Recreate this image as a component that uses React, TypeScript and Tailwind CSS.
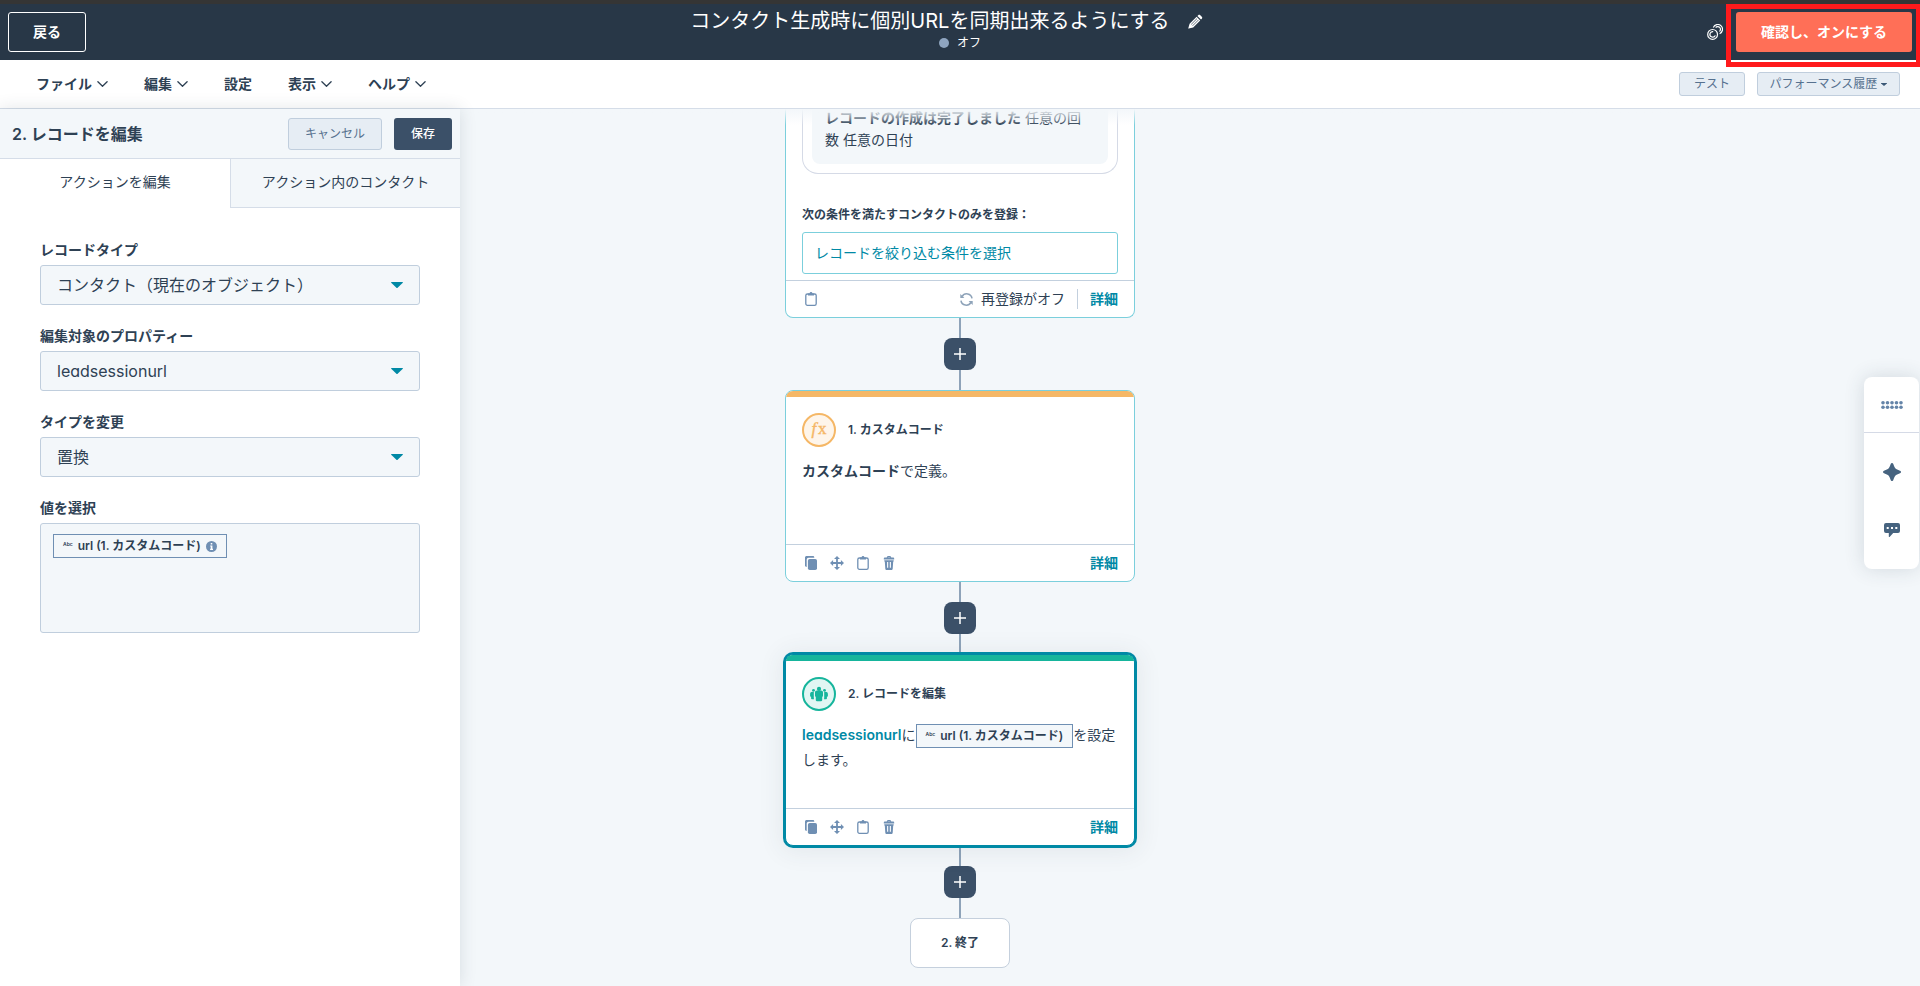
import React from "react";

type IconProps = { className?: string };

const ChevronDown = () => (
  <svg className="h-[6px] w-[11px]" viewBox="0 0 11 6" fill="none" stroke="currentColor" strokeWidth="1.3" strokeLinecap="round" strokeLinejoin="round" aria-hidden="true">
    <path d="M.9.7 5.5 5.2 10.1.7" />
  </svg>
);

const Caret = ({ className = "" }: IconProps) => (
  <svg className={className} viewBox="0 0 12 6" fill="currentColor" aria-hidden="true">
    <path d="M.6 0h10.8c.5 0 .7.5.4.8L6.6 5.7a.9.9 0 0 1-1.2 0L.2.8C-.1.5.1 0 .6 0Z" />
  </svg>
);

const Pencil = () => (
  <svg className="h-[15px] w-[15px]" viewBox="0 0 15 15" aria-hidden="true">
    <path fill="#fff" d="M10.2 1.2c.6-.6 1.5-.6 2.1 0l1.5 1.5c.6.6.6 1.5 0 2.1l-.8.8-3.600-3.600ZM8.600 2.800l3.600 3.600-7 7L.7 14.600c-.3.1-.5-.1-.4-.4l1.300-4.400Z" />
    <path stroke="#283747" strokeWidth=".7" d="M9 4.600 3.200 10.400M10.400 6 4.600 11.800" />
  </svg>
);

const LinkRings = () => (
  <svg className="h-4 w-4" viewBox="0 0 16 16" fill="none" stroke="#fff" strokeWidth="1.200" aria-hidden="true">
    <circle cx="5.600" cy="10.400" r="4.900" />
    <path d="M6.200 7.600a2.800 2.800 0 1 0 2.100 3.800" />
    <path d="M6.300 3.400A4.800 4.800 0 1 1 12.600 9.700" />
    <path d="M8.600 3.500a2.800 2.800 0 1 1 3.900 4" />
  </svg>
);

const Clipboard = () => (
  <svg className="h-[14px] w-[14px]" viewBox="0 0 14 14" aria-hidden="true">
    <rect x="1.800" y="2" width="10.400" height="11.300" rx="1.600" fill="none" stroke="currentColor" strokeWidth="1.300" />
    <path fill="currentColor" d="M4 1.400h1.600a1.400 1.400 0 0 1 2.800 0H10v2.100H4Z" />
  </svg>
);

const Copy = () => (
  <svg className="h-[14px] w-[14px]" viewBox="0 0 14 14" fill="currentColor" aria-hidden="true">
    <path d="M2.600 0h6.200c.9 0 1.400.5 1.500 1.400v.3H4.700c-1.200 0-2 .8-2 2v7.300C1.700 10.900 1 10.400 1 9.500V1.600C1 .7 1.700 0 2.600 0Z" />
    <rect x="3.900" y="2.900" width="9.100" height="11.100" rx="1.800" />
  </svg>
);

const Move = () => (
  <svg className="h-[14px] w-[14px]" viewBox="0 0 14 14" fill="currentColor" aria-hidden="true">
    <path d="M7 0 10 3.100H7.900v3h3V4L14 7l-3.100 3V7.900h-3v3H10L7 14l-3-3.100h2.100v-3h-3V10L0 7l3.100-3v2.100h3v-3H4Z" />
  </svg>
);

const Trash = () => (
  <svg className="h-[14px] w-[14px]" viewBox="0 0 14 14" fill="currentColor" aria-hidden="true">
    <path fillRule="evenodd" d="M2.700 1.500h2l.5-1c.2-.3.400-.5.700-.5h2.200c.3 0 .5.200.7.500l.5 1h2c.5 0 .9.400.9.900v1.100H1.800V2.400c0-.5.400-.9.900-.9Zm3.200-.3-.1.300h2.400l-.1-.3Z" />
    <path fillRule="evenodd" d="M2.300 4.200h9.400v1.300h-.5l-.5 7.200c-.1.800-.6 1.300-1.400 1.300H4.700c-.8 0-1.300-.5-1.400-1.300l-.5-7.200h-.5ZM5.100 6v5.800h1.100V6Zm2.700 0v5.800h1.100V6Z" />
  </svg>
);

const Sync = () => (
  <svg className="h-[13px] w-[13px]" viewBox="0 0 13 13" fill="none" stroke="currentColor" strokeWidth="1.600" aria-hidden="true">
    <path d="M12 5.400A5.300 5.300 0 0 0 2.100 3.600M1 7.600A5.300 5.300 0 0 0 10.900 9.400" />
    <path d="M.3.900v4.100h4.100ZM12.700 12.100V8H8.600Z" fill="currentColor" stroke="none" />
  </svg>
);

const People = () => (
  <svg className="h-[18px] w-[18px]" viewBox="0 0 18 18" fill="#16b59c" aria-hidden="true">
    <circle cx="9" cy="3.900" r="2.100" />
    <path d="M7 5.600h4c1.300 0 2 .8 2 2v2.900c0 .9-.4 1.300-.8 1.300v3.300c0 .7-.4 1.100-1 1.100H6.800c-.6 0-1-.4-1-1.100v-3.300c-.4 0-.8-.4-.8-1.300V7.600c0-1.200.700-2 2-2Z" />
    <circle cx="3.500" cy="5.300" r="1.400" />
    <circle cx="14.500" cy="5.300" r="1.400" />
    <path d="M3.800 6.700v6.700c.4.200.4.900-.2.900H1.900c-.5 0-.8-.3-.8-.8v-1.700c-.6 0-1-.4-1-1.100V9c0-1.400 1-2.300 2.400-2.300ZM14.200 6.700v6.700c-.4.200-.4.900.2.900h1.700c.5 0 .8-.3.800-.8v-1.700c.6 0 1-.4 1-1.100V9c0-1.400-1-2.300-2.400-2.300Z" />
  </svg>
);

const Info = () => (
  <svg className="h-[11px] w-[11px]" viewBox="0 0 11 11" aria-hidden="true">
    <circle cx="5.500" cy="5.500" r="5.500" fill="#6f8fb3" />
    <path fill="#fff" d="M4.700 2h1.600v1.500H4.700ZM4.200 4.500h2.200v3.300h.6V9H4.100V7.800h.6V5.600h-.5Z" />
  </svg>
);

const menus = [
  { label: "ファイル", arrow: true },
  { label: "編集", arrow: true },
  { label: "設定", arrow: false },
  { label: "表示", arrow: true },
  { label: "ヘルプ", arrow: true },
];

const fields = [
  { id: "record-type", label: "レコードタイプ", value: "コンタクト（現在のオブジェクト）" },
  { id: "property", label: "編集対象のプロパティー", value: "leadsessionurl" },
  { id: "change-type", label: "タイプを変更", value: "置換" },
];

function Token({ info = false }: { info?: boolean }) {
  return (
    <span className="inline-flex h-6 items-center gap-[5px] whitespace-nowrap border border-[#6f8fb3] bg-[#f3f7fa] px-[9px] align-middle text-xs font-semibold leading-4">
      <span className="self-start pt-[3px] text-[5px] font-semibold leading-3">Abc</span>
      <span>url (1. カスタムコード)</span>
      {info && <Info />}
    </span>
  );
}

function Connector() {
  return (
    <div className="flex flex-col items-center">
      <div className="h-5 w-0.5 bg-[#8ea3b9]" />
      <button type="button" aria-label="アクションを追加" className="flex h-8 w-8 items-center justify-center rounded-lg bg-[#3b5068] text-white">
        <svg className="h-3 w-3" viewBox="0 0 12 12" stroke="currentColor" strokeWidth="1.500" aria-hidden="true">
          <path d="M6 0v12M0 6h12" />
        </svg>
      </button>
      <div className="h-5 w-0.5 bg-[#8ea3b9]" />
    </div>
  );
}

function DetailLink() {
  return (
    <a href="#details" className="text-sm font-bold leading-5 text-[#0089a5]">
      詳細
    </a>
  );
}

function CardTools() {
  return (
    <footer className="flex h-[37px] items-center justify-between border-t border-[#c3d0de] px-4">
      <div className="flex items-center gap-3 pl-[2px] text-[#6f8fb3]">
        <button type="button" aria-label="コピー"><Copy /></button>
        <button type="button" aria-label="移動"><Move /></button>
        <button type="button" aria-label="クリップボード"><Clipboard /></button>
        <button type="button" aria-label="削除"><Trash /></button>
      </div>
      <DetailLink />
    </footer>
  );
}

function TopBar() {
  return (
    <header className="relative grid h-[60px] grid-cols-[1fr_auto_1fr] items-center border-t-4 border-[#353535] bg-[#283747] px-2 text-white">
      <div>
        <button type="button" className="h-10 w-[78px] rounded-[3px] border border-white text-sm font-bold">
          戻る
        </button>
      </div>
      <div className="flex flex-col items-center pb-[6px]">
        <div className="flex items-center">
          <h1 className="whitespace-nowrap text-xl leading-7">コンタクト生成時に個別URLを同期出来るようにする</h1>
          <button type="button" aria-label="名前を編集" className="flex w-[60px] pl-[18px]">
            <Pencil />
          </button>
        </div>
        <p className="flex items-center gap-2 text-xs leading-4">
          <span className="h-[10px] w-[10px] rounded-full bg-[#8fa5c0]" />
          オフ
        </p>
      </div>
      <div className="flex items-center justify-end gap-[13px]">
        <button type="button" aria-label="リンク">
          <LinkRings />
        </button>
        <button type="button" className="h-10 w-44 rounded-[3px] bg-[#ff6f57] text-sm font-bold">
          確認し、オンにする
        </button>
      </div>
      <div className="pointer-events-none absolute right-0 top-0 z-20 h-[63px] w-[194px] border-[5px] border-r-4 border-[#ff1a1c]" />
    </header>
  );
}

function MenuBar() {
  return (
    <nav className="flex h-[49px] items-center justify-between border-b border-[#d5dde8] bg-white pl-9 pr-5">
      <div className="flex items-center gap-9">
        {menus.map((m) => (
          <button key={m.label} type="button" className="flex items-center gap-[5px] text-sm font-semibold">
            {m.label}
            {m.arrow && <ChevronDown />}
          </button>
        ))}
      </div>
      <div className="flex items-center gap-3 text-xs text-[#56718f]">
        <button type="button" className="h-6 w-[66px] rounded-[3px] border border-[#c0cedd] bg-[#e6edf4]">
          テスト
        </button>
        <button type="button" className="flex h-6 w-[143px] items-center justify-center gap-1 rounded-[3px] border border-[#c0cedd] bg-[#e6edf4]">
          パフォーマンス履歴
          <Caret className="h-[3px] w-[6px] text-[#3b5876]" />
        </button>
      </div>
    </nav>
  );
}

function EditPanel() {
  return (
    <aside className="z-10 w-[460px] shrink-0 bg-white shadow-[0_0_16px_rgba(45,62,80,0.14)]">
      <div className="flex h-[50px] items-center justify-between border-b border-[#d5dde8] bg-[#f3f7fa] pl-3 pr-2">
        <h2 className="text-base font-semibold">2. レコードを編集</h2>
        <div className="flex gap-3 text-xs">
          <button type="button" className="h-8 w-[94px] rounded-[3px] border border-[#c0cedd] bg-[#e6edf4] text-[#56718f]">
            キャンセル
          </button>
          <button type="button" className="h-8 w-[58px] rounded-[3px] bg-[#3b5068] font-medium text-white">
            保存
          </button>
        </div>
      </div>
      <div role="tablist" className="grid h-[49px] grid-cols-2 text-sm">
        <button type="button" role="tab" aria-selected="true" className="border-b border-transparent pb-0.5">
          アクションを編集
        </button>
        <button type="button" role="tab" aria-selected="false" className="border-b border-l border-[#d5dde8] bg-[#f3f7fa] pb-0.5">
          アクション内のコンタクト
        </button>
      </div>
      <form className="flex flex-col gap-[21px] px-10 pt-8">
        {fields.map((f) => (
          <div key={f.id} className="flex flex-col gap-[5px]">
            <label htmlFor={f.id} className="text-sm font-semibold leading-5">
              {f.label}
            </label>
            <div className="relative">
              <select id={f.id} className="h-10 w-full appearance-none rounded-[3px] border border-[#c0cedd] bg-[#f3f7fa] px-4 text-base">
                <option>{f.value}</option>
              </select>
              <Caret className="pointer-events-none absolute right-[17px] top-[17px] h-[6px] w-3 text-[#0089a5]" />
            </div>
          </div>
        ))}
        <div className="flex flex-col gap-[5px]">
          <label htmlFor="value" className="text-sm font-semibold leading-5">
            値を選択
          </label>
          <div className="flex h-[110px] items-start gap-2 rounded-[3px] border border-[#c0cedd] bg-[#f3f7fa] px-3 py-[10px]">
            <Token info />
            <textarea id="value" className="h-full min-w-0 flex-1 resize-none bg-transparent text-xs outline-none" />
          </div>
        </div>
      </form>
    </aside>
  );
}

function TriggerCard() {
  return (
    <section className="w-[350px] rounded-b-lg border border-t-0 border-[#7bcfdc] bg-white">
      <div className="px-4 pb-[6px]">
        <div className="rounded-b-2xl border border-t-0 border-[#d5dae6] px-[9px] pb-[9px]">
          <p className="rounded-b-lg bg-[#f3f7fa] pb-[13px] pl-[13px] pr-6 text-sm leading-[22px]">
            <b className="font-semibold">レコードの作成は完了しました</b> 任意の回数 任意の日付
          </p>
        </div>
        <h3 className="pb-[7px] pt-[31px] text-xs font-semibold leading-5">次の条件を満たすコンタクトのみを登録：</h3>
        <button type="button" className="h-[42px] w-full rounded-[3px] border border-[#7bcfdc] px-3 text-left text-sm text-[#0089a5]">
          レコードを絞り込む条件を選択
        </button>
      </div>
      <footer className="flex h-[37px] items-center justify-between border-t border-[#c3d0de] px-4">
        <button type="button" aria-label="クリップボード" className="pl-[2px] text-[#6f8fb3]">
          <Clipboard />
        </button>
        <div className="flex items-center text-sm">
          <span className="pr-2 text-[#8ea3b9]"><Sync /></span>
          <span className="mr-3 border-r border-[#c3d0de] pr-3 leading-5">再登録がオフ</span>
          <DetailLink />
        </div>
      </footer>
    </section>
  );
}

function Canvas() {
  return (
    <main className="relative flex-1 overflow-hidden pb-4 pr-[460px]">
      <div className="-mt-0.5 flex flex-col items-center">
        <TriggerCard />
        <Connector />
        <section className="flex h-48 w-[350px] flex-col overflow-hidden rounded-lg border border-[#7bcfdc] bg-white">
          <div className="h-[6px] bg-[#f5b766]" />
          <div className="flex flex-1 flex-col gap-3 px-4 pt-4">
            <div className="flex items-center gap-3">
              <span className="flex h-[34px] w-[34px] items-center justify-center rounded-full border-2 border-[#f5b766] bg-[#fef5ea] pb-[3px] font-['Liberation_Serif',serif] text-[17px] leading-5 text-[#f5b766] [-webkit-text-stroke:0.4px_#f5b766]">
                <i>f</i><span className="pl-0.5">x</span>
              </span>
              <h3 className="text-xs font-semibold">1. カスタムコード</h3>
            </div>
            <p className="text-sm leading-6"><b className="font-semibold">カスタムコード</b>で定義。</p>
          </div>
          <CardTools />
        </section>
        <Connector />
        <section className="z-10 flex h-48 w-[350px] flex-col rounded-lg border border-[#0089a5] bg-white shadow-[0_0_0_2px_#0089a5,0_2px_24px_4px_rgba(45,62,80,0.08)]">
          <div className="h-[6px] rounded-t-md bg-[#16b59c]" />
          <div className="flex flex-1 flex-col gap-3 px-4 pt-4">
            <div className="flex items-center gap-3">
              <span className="flex h-[34px] w-[34px] items-center justify-center rounded-full border-2 border-[#16b59c] bg-[#e1f6f3]">
                <People />
              </span>
              <h3 className="text-xs font-semibold">2. レコードを編集</h3>
            </div>
            <p className="text-sm leading-6">
              <a href="#property" className="font-semibold text-[#0089a5]">leadsessionurl</a>に<Token />を設定します。
            </p>
          </div>
          <CardTools />
        </section>
        <Connector />
        <div className="flex h-[50px] w-[100px] items-center justify-center rounded-lg border border-[#c5d0dd] bg-white text-xs font-semibold">
          2. 終了
        </div>
      </div>
      <div className="pointer-events-none absolute inset-x-0 top-0 h-4 bg-linear-to-b from-[#f3f7fa] to-transparent" />
    </main>
  );
}

function SideTools() {
  return (
    <div className="absolute right-px top-[377px] z-10 flex w-[55px] flex-col overflow-hidden rounded-lg bg-white text-[#46637f] shadow-[0_0_20px_rgba(45,62,80,0.16)]">
      <button type="button" aria-label="ツールバーを移動" className="flex h-14 items-center justify-center border-b border-[#d5dae6] text-[#6484a8]">
        <svg className="h-2 w-[22px]" viewBox="0 0 22 8" fill="currentColor" aria-hidden="true">
          {[2, 6.5, 11, 15.5, 20].map((x) => (
            <g key={x}>
              <circle cx={x} cy="1.800" r="1.800" />
              <circle cx={x} cy="6.200" r="1.800" />
            </g>
          ))}
        </svg>
      </button>
      <button type="button" aria-label="AIアシスタント" className="flex h-[78px] items-center justify-center">
        <svg className="h-[18px] w-[18px]" viewBox="0 0 18 18" fill="currentColor" aria-hidden="true">
          <path d="M9 0c.7 0 1 .4 1.300 1 1 2.500 1.500 3.700 2.200 4.500.8.700 2 1.200 4.500 2.200.6.300 1 .6 1 1.300s-.4 1-1 1.300c-2.500 1-3.700 1.500-4.500 2.200-.7.800-1.200 2-2.200 4.500-.3.600-.6 1-1.300 1s-1-.4-1.300-1c-1-2.500-1.500-3.700-2.200-4.500C4.700 11.800 3.500 11.300 1 10.300.4 10 0 9.700 0 9s.4-1 1-1.300c2.500-1 3.700-1.500 4.500-2.200C6.200 4.700 6.700 3.500 7.700 1 8 .4 8.300 0 9 0Z" />
        </svg>
      </button>
      <button type="button" aria-label="コメント" className="flex h-[58px] items-start justify-center pt-3">
        <svg className="h-[14px] w-4" viewBox="0 0 16 14" aria-hidden="true">
          <path fill="currentColor" d="M2 0h12a2 2 0 0 1 2 2v6a2 2 0 0 1-2 2H9.200L5.800 13.800c-.4.400-1 .1-1-.4V10H2a2 2 0 0 1-2-2V2a2 2 0 0 1 2-2Z" />
          <path fill="#fff" d="M2.700 4h2v2h-2ZM7 4h2v2H7ZM11.300 4h2v2h-2Z" />
        </svg>
      </button>
    </div>
  );
}

export default function App() {
  return (
    <div className="relative flex min-h-screen flex-col bg-[#f3f7fa] font-['Inter','Noto_Sans_CJK_JP',sans-serif] text-[#2e4154] [font-feature-settings:'cv11']">
      <TopBar />
      <MenuBar />
      <div className="flex flex-1">
        <EditPanel />
        <Canvas />
      </div>
      <SideTools />
    </div>
  );
}
